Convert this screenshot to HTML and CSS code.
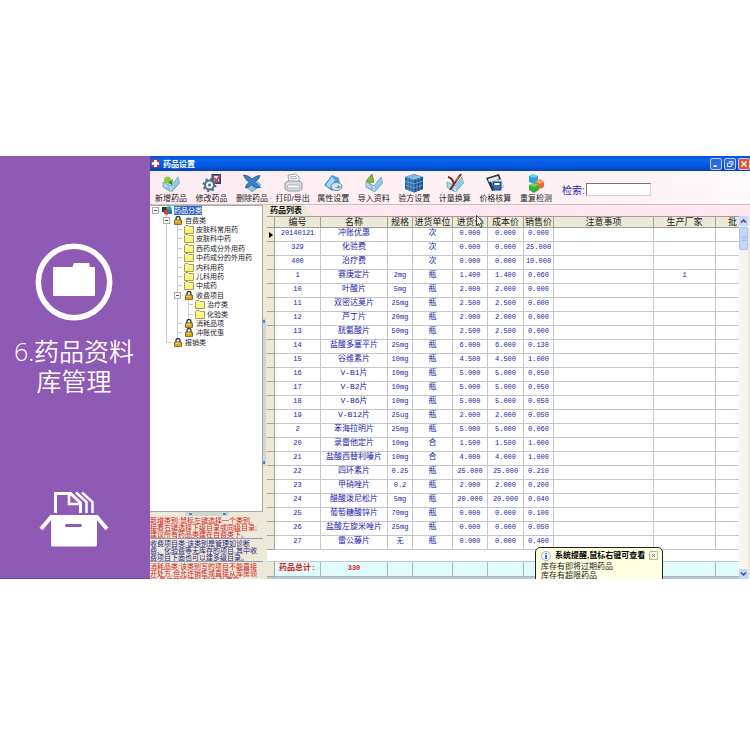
FILE: index.html
```
<!DOCTYPE html>
<html lang="zh-CN">
<head>
<meta charset="utf-8">
<title>药品设置</title>
<link rel="stylesheet" href="styles.css">
</head>
<body>
<svg class="defs" aria-hidden="true">
  <defs>
    <linearGradient id="glass" x1="0" y1="0" x2="1" y2="1"><stop offset="0" stop-color="#e4f6fd"/><stop offset="1" stop-color="#4ba3cf"/></linearGradient>
    <symbol id="folder" viewBox="0 0 10 9"><path d="M.5 8.500V1.500L1.500.5H4l1 1h4.500v7z" fill="#fbf07a" stroke="#8f8748" stroke-width=".8"/><path d="M1.500 3h7" stroke="#fffbd0"/></symbol>
    <symbol id="lock" viewBox="0 0 10 9"><path d="M3 4.500V2.500a2 2 0 0 1 4 0v2" fill="none" stroke="#333" stroke-width="1.300"/><rect x="1.500" y="4" width="7" height="4.700" rx=".6" fill="#dca21b" stroke="#4f3a08" stroke-width=".7"/><path d="M2.500 5.200h4" stroke="#ffe27d"/></symbol>
    <symbol id="book" viewBox="0 0 20 20"><path d="M2 9l8 4 7-9 1.500 6-8 9L2 14z" fill="url(#glass)" stroke="#4b8bab" stroke-width=".7"/><path d="M10 13v5.500" stroke="#fff"/><path d="M10.500 13l6.500-9 1.300 5.500-7.500 8.700z" fill="#8dcbe6"/></symbol>
  </defs>
</svg>
<div class="stage">
  <aside class="side">
    <svg class="side-ring" viewBox="0 0 78 78"><circle cx="39" cy="39" r="35.700" fill="none" stroke="#fff" stroke-width="5.500"/><path d="M19 24h18.500l1.500-4h14.500q1 0 1 1v3h4.500q1 0 1 1v27q0 1-1 1H19q-1 0-1-1V25q0-1 1-1z" fill="#fff"/></svg>
    <h1>6.药品资料<br>库管理</h1>
    <svg class="side-box" viewBox="0 0 70 56"><g fill="none" stroke="#fff" stroke-width="3"><path d="M16.500 22V2.500h15l10 9.500V22"/><path d="M30 2.500v10.500h11.500" stroke-width="2.600"/><path d="M37 1.500l10.500 9.500V22M43 1.500l10.500 9.500V22" stroke-width="2.500"/><path d="M2 38l11-13M68 38L57 25" stroke-width="4"/></g><path d="M12 24h46v30q0 1.500-1.500 1.500h-43Q12 55.500 12 54z" fill="#fff"/><rect x="26" y="33" width="17" height="3" rx="1.500" fill="#8e5ab3"/></svg>
  </aside>
  <main class="app">
    <header class="titlebar">
      <svg viewBox="0 0 10 10"><circle cx="5" cy="5" r="5" fill="#c3382c"/><path d="M3.500 1h3v2.500H9v3H6.500V9h-3V6.500H1v-3h2.500z" fill="#fff"/></svg>
      <span class="title">药品设置</span>
      <button class="win" aria-label="最小化"><svg viewBox="0 0 12 12"><path d="M3 8.500h4" stroke="#fff" stroke-width="2"/></svg></button>
      <button class="win" aria-label="还原"><svg viewBox="0 0 12 12"><path d="M5 4V3h4.500v4H8M3 5h4.500v4H3z" fill="none" stroke="#fff"/></svg></button>
      <button class="win close" aria-label="关闭"><svg viewBox="0 0 12 12"><path d="M3 3l6 6M9 3l-6 6" stroke="#fff" stroke-width="1.700"/></svg></button>
    </header>
    <div class="toolbar">
      <nav class="tools">
        <button><svg viewBox="0 0 20 20"><use href="#book"/><circle cx="6.500" cy="7" r="3.500" fill="#8ecb35"/><path d="M7 10l5-4-1 6z" fill="#398c32"/></svg>新增药品</button>
        <button><svg viewBox="0 0 20 20"><rect x="10" y="1.500" width="8.500" height="9" fill="#466ca7" stroke="#223b67"/><path d="M12 3h5v5h-5z" fill="#dfeaf8"/><path d="M12 5l2.500 3L18 2" stroke="#e9393a" stroke-width="2" fill="none"/><circle cx="7.500" cy="12" r="4.500" fill="#eef5fa" stroke="#536f86" stroke-width="2"/><circle cx="7.500" cy="12" r="6" fill="none" stroke="#536f86" stroke-width="2" stroke-dasharray="2.200 2.500"/><circle cx="7.500" cy="12" r="1.500" fill="#496e8a"/></svg>修改药品</button>
        <button><svg viewBox="0 0 20 20"><path d="M3 13l9-8 7 7-9 7z" fill="url(#glass)" stroke="#5b95bd" stroke-width=".6"/><path d="M1.500 2q5 0 8.500 4 4-3.500 8-3.500-1 4.500-5 6 3 4 5.500 6-5 1.500-9-2.500-3 3.500-6 3 1-4 3.500-5.500-4-3-5.500-7.500z" fill="#3d7fc6" stroke="#23589b" stroke-width=".8"/></svg>删除药品</button>
        <button><svg viewBox="0 0 20 20"><path d="M6 10L5 2l8-1 3 3v6z" fill="#fff" stroke="#888" stroke-width=".8"/><path d="M2 10l3-2h11l3 2v6l-3 2H5l-3-2z" fill="#d7dce2" stroke="#7c838c" stroke-width=".8"/><path d="M5 12h11l1 3H4z" fill="#f8fafc" stroke="#90969d" stroke-width=".6"/><path d="M7 4l6-.5M7 6l7-.5" stroke="#9aa"/></svg>打印/导出</button>
        <button><svg viewBox="0 0 20 20"><path d="M1 12L9 2l7 3 1 6-8 7z" fill="#4d9cdc"/><path d="M3 12l6-8 3 3-5 8z" fill="#a8d7f7"/><ellipse cx="13.500" cy="13.500" rx="5.500" ry="4" fill="#d4e6f4" stroke="#5b88b1"/><path d="M11 14h4l-1-2 4 2-4 2 1-1z" fill="#48a045"/></svg>属性设置</button>
        <button><svg viewBox="0 0 20 20"><use href="#book"/><path d="M2 8l6-7 2 8-4 1z" fill="#7eb83e" stroke="#54852b" stroke-width=".7"/></svg>导入资料</button>
        <button><svg viewBox="0 0 20 20"><path d="M1 4l9-3 9 3v12l-9 3.500L1 16z" fill="#2669a5"/><path d="M1 4l9-3 9 3-9 3z" fill="#70b3dd"/><path d="M10 7l9-3v12l-9 3.500z" fill="#174f8d"/><path d="M10 7v12M4 5v12M7 6v12.500M13 6v12.500M16 5v12M1 8l9 3 9-3M1 12l9 3 9-3M4 3l9 3M7 2l9 3M7 6l9-3" stroke="#9dcff0" stroke-width=".5" fill="none"/></svg>验方设置</button>
        <button><svg viewBox="0 0 20 20"><use href="#book"/><path d="M3 4q5 1 6 8M16 1L5 17" stroke="#6c2c21" stroke-width="2" fill="none"/><path d="M14 3l-3 5" stroke="#d9572e" stroke-width="1.500"/></svg>计量换算</button>
        <button><svg viewBox="0 0 20 20"><path d="M1 5l13-4 5 13-12 4z" fill="#273642"/><path d="M3 6l10-3 1 3L4 9z" fill="#eee"/><path d="M6 8l11-2 2 8-10 3z" fill="#d4e2eb"/><rect x="8" y="9" width="8" height="8" fill="#2d72bd" stroke="#184076"/><path d="M9.500 10h5v2h-5z" fill="#fff"/></svg>价格核算</button>
        <button><svg viewBox="0 0 20 20"><path d="M7 1l5 2v6l-4 2-5-2V3z" fill="#26a7d9"/><path d="M3 3l5 2 4-2-5-2z" fill="#74d2ef"/><path d="M14 6l4 3v5l-4 2-5-2V9z" fill="#ef6536"/><path d="M9 9l5 2 4-2-4-3z" fill="#ff9b66"/><path d="M8 10l5 2v5l-5 3-5-3v-5z" fill="#3eac3b"/><path d="M3 12l5-2 5 2-5 2z" fill="#7bd266"/></svg>重复检测</button>
      </nav>
      <label class="search">检索:<input type="text"></label>
    </div>
    <div class="body">
      <section class="left">
        <div class="treebox">
          <ul class="tree">
            <li class="l0"><i class="ex"></i><svg viewBox="0 0 10 9"><rect x="0" y="1" width="5" height="5" fill="#203f37"/><circle cx="7" cy="3" r="2.700" fill="#25a9a4"/><circle cx="4.500" cy="6" r="2.700" fill="#d33832"/><rect x="6" y="4" width="4" height="4" fill="#2878d0"/></svg><span class="sel">药品分类</span></li>
            <li class="l1"><i class="ex"></i><svg><use href="#lock"/></svg>自费类</li>
            <li class="l2"><i></i><svg><use href="#folder"/></svg>皮肤科常用药</li>
            <li class="l2"><i></i><svg><use href="#folder"/></svg>皮肤科中药</li>
            <li class="l2"><i></i><svg><use href="#folder"/></svg>西药成分外用药</li>
            <li class="l2"><i></i><svg><use href="#folder"/></svg>中药成分的外用药</li>
            <li class="l2"><i></i><svg><use href="#folder"/></svg>内科用药</li>
            <li class="l2"><i></i><svg><use href="#folder"/></svg>儿科用药</li>
            <li class="l2"><i></i><svg><use href="#folder"/></svg>中成药</li>
            <li class="l2"><i class="ex"></i><svg><use href="#lock"/></svg>收费项目</li>
            <li class="l3"><i></i><svg><use href="#folder"/></svg>治疗类</li>
            <li class="l3"><i></i><svg><use href="#folder"/></svg>化验类</li>
            <li class="l2"><i></i><svg><use href="#lock"/></svg>消耗品项</li>
            <li class="l2"><i></i><svg><use href="#lock"/></svg>冲账优惠</li>
            <li class="l1"><i></i><svg><use href="#lock"/></svg>报销类</li>
          </ul>
        </div>
        <div class="hsplit"><span></span></div>
        <div class="notes">
          <p class="red">新增类别:鼠标左键选择一个类别,<br>接着右键选择下级目录或同级目录;<br>建议所有药品类建在自费类下。</p>
          <p class="navy">收费项目类:该类别是管理如诊断<br>费、化验费等无库存的项目,其中收<br>费项目下面也可以建多级目录。</p>
          <p class="red">消耗品类:该类别写的项目不能直接<br>开处方,但允许销售或直接从库房领<br>用,具体的管理如:如床,处置等</p>
        </div>
      </section>
      <div class="vsplit"><span></span></div>
      <section class="right">
        <div class="tabs"><h2>药品列表</h2></div>
        <div class="gridwrap">
          <table>
            <colgroup><col class="w8"><col class="w46"><col class="w67"><col class="w25"><col class="w40"><col class="w35"><col class="w36"><col class="w30"><col class="w100"><col class="w62"><col></colgroup>
            <thead><tr><th></th><th>编号</th><th>名称</th><th>规格</th><th>进货单位</th><th>进货价</th><th>成本价</th><th>销售价</th><th>注意事项</th><th>生产厂家</th><th class="cut">批</th></tr></thead>
            <tbody>
              <tr><th class="cur"></th><td>20140121</td><td>冲账优惠</td><td></td><td>次</td><td>0.000</td><td>0.000</td><td>0.000</td><td></td><td></td><td></td></tr>
              <tr><th></th><td>329</td><td>化验费</td><td></td><td>次</td><td>0.000</td><td>0.000</td><td>25.000</td><td></td><td></td><td></td></tr>
              <tr><th></th><td>400</td><td>治疗费</td><td></td><td>次</td><td>0.000</td><td>0.000</td><td>10.000</td><td></td><td></td><td></td></tr>
              <tr><th></th><td>1</td><td>赛庚定片</td><td>2mg</td><td>瓶</td><td>1.400</td><td>1.400</td><td>0.060</td><td></td><td>1</td><td></td></tr>
              <tr><th></th><td>10</td><td>叶酸片</td><td>5mg</td><td>瓶</td><td>2.000</td><td>2.000</td><td>0.000</td><td></td><td></td><td></td></tr>
              <tr><th></th><td>11</td><td>双密达莫片</td><td>25mg</td><td>瓶</td><td>2.500</td><td>2.500</td><td>0.000</td><td></td><td></td><td></td></tr>
              <tr><th></th><td>12</td><td>芦丁片</td><td>20mg</td><td>瓶</td><td>2.000</td><td>2.000</td><td>0.000</td><td></td><td></td><td></td></tr>
              <tr><th></th><td>13</td><td>胱氨酸片</td><td>50mg</td><td>瓶</td><td>2.500</td><td>2.500</td><td>0.000</td><td></td><td></td><td></td></tr>
              <tr><th></th><td>14</td><td>盐酸多塞平片</td><td>25mg</td><td>瓶</td><td>6.000</td><td>6.000</td><td>0.130</td><td></td><td></td><td></td></tr>
              <tr><th></th><td>15</td><td>谷维素片</td><td>10mg</td><td>瓶</td><td>4.500</td><td>4.500</td><td>1.000</td><td></td><td></td><td></td></tr>
              <tr><th></th><td>16</td><td>V-B1片</td><td>10mg</td><td>瓶</td><td>5.000</td><td>5.000</td><td>0.050</td><td></td><td></td><td></td></tr>
              <tr><th></th><td>17</td><td>V-B2片</td><td>10mg</td><td>瓶</td><td>5.000</td><td>5.000</td><td>0.050</td><td></td><td></td><td></td></tr>
              <tr><th></th><td>18</td><td>V-B6片</td><td>10mg</td><td>瓶</td><td>5.000</td><td>5.000</td><td>0.050</td><td></td><td></td><td></td></tr>
              <tr><th></th><td>19</td><td>V-B12片</td><td>25ug</td><td>瓶</td><td>2.000</td><td>2.000</td><td>0.050</td><td></td><td></td><td></td></tr>
              <tr><th></th><td>2</td><td>苯海拉明片</td><td>25mg</td><td>瓶</td><td>5.000</td><td>5.000</td><td>0.060</td><td></td><td></td><td></td></tr>
              <tr><th></th><td>20</td><td>录雷他定片</td><td>10mg</td><td>合</td><td>1.500</td><td>1.500</td><td>1.000</td><td></td><td></td><td></td></tr>
              <tr><th></th><td>21</td><td>盐酸西替利嗪片</td><td>10mg</td><td>合</td><td>4.000</td><td>4.000</td><td>1.000</td><td></td><td></td><td></td></tr>
              <tr><th></th><td>22</td><td>四环素片</td><td>0.25</td><td>瓶</td><td>25.000</td><td>25.000</td><td>0.210</td><td></td><td></td><td></td></tr>
              <tr><th></th><td>23</td><td>甲硝唑片</td><td>0.2</td><td>瓶</td><td>2.000</td><td>2.000</td><td>0.200</td><td></td><td></td><td></td></tr>
              <tr><th></th><td>24</td><td>醋酸泼尼松片</td><td>5mg</td><td>瓶</td><td>20.000</td><td>20.000</td><td>0.040</td><td></td><td></td><td></td></tr>
              <tr><th></th><td>25</td><td>葡萄糖酸锌片</td><td>70mg</td><td>瓶</td><td>0.000</td><td>0.000</td><td>0.100</td><td></td><td></td><td></td></tr>
              <tr><th></th><td>26</td><td>盐酸左旋米唑片</td><td>25mg</td><td>瓶</td><td>0.000</td><td>0.000</td><td>0.050</td><td></td><td></td><td></td></tr>
              <tr><th></th><td>27</td><td>雷公藤片</td><td>无</td><td>瓶</td><td>0.000</td><td>0.000</td><td>0.400</td><td></td><td></td><td></td></tr>
            </tbody>
            <tfoot>
              <tr class="gap"><td colspan="11"></td></tr>
              <tr class="sum"><th></th><td>药品总计:</td><td>330</td><td></td><td></td><td></td><td></td><td></td><td></td><td></td><td></td></tr>
            </tfoot>
          </table>
          <div class="scroll">
            <button aria-label="向上"><svg viewBox="0 0 9 10"><path d="M2 6.500L4.500 4 7 6.500" fill="none" stroke="#34507f" stroke-width="1.500"/></svg></button>
            <span class="thumb"></span>
            <button class="down" aria-label="向下"><svg viewBox="0 0 9 10"><path d="M2 3.500L4.500 6 7 3.500" fill="none" stroke="#34507f" stroke-width="1.500"/></svg></button>
          </div>
        </div>
      </section>
    </div>
    <svg class="cursor" viewBox="0 0 8 13"><path d="M.5.5v10l2.300-2 1.700 3.800 1.700-.8-1.700-3.500h3z" fill="#fff" stroke="#222" stroke-width=".8"/></svg>
    <div class="tip" role="status">
      <div class="tip-head">
        <svg viewBox="0 0 10 10"><circle cx="5" cy="5" r="4.500" fill="#f4f9ff" stroke="#9fb2cc"/><path d="M5 4v4M5 2v1.300" stroke="#1b3fb5" stroke-width="1.500"/></svg>
        <strong>系统提醒,鼠标右键可查看</strong>
        <button aria-label="关闭提醒"><svg viewBox="0 0 9 9"><path d="M2.500 2.500l4 4M6.500 2.500l-4 4" stroke="#555"/></svg></button>
      </div>
      <p>库存有即将过期药品<br>库存有超限药品</p>
    </div>
  </main>
</div>
</body>
</html>
```
FILE: styles.css
```
* { box-sizing: border-box; margin: 0; padding: 0; }
body { background: #fff; font-family: "Liberation Sans", "Noto Sans CJK SC", sans-serif; font-size: 8px; color: #222; }
button { border: 0; background: none; font: inherit; color: inherit; }
svg { display: block; flex: none; }
.defs { position: absolute; width: 0; height: 0; }

.stage { display: flex; padding-top: 156px; }

/* Purple banner */
.side { width: 150px; flex: none; background: #8e5ab3; border-bottom: 1px solid #7544a0; color: #fff; display: flex; flex-direction: column; align-items: center; padding: 87px 2px 31px 0; }
.side-ring { width: 78px; height: 78px; }
.side h1 { font: 350 25px/30px "Open Sans", "Noto Sans CJK SC", sans-serif; text-align: center; margin-top: 15px; white-space: nowrap; }
.side-box { width: 70px; height: 56px; margin-top: auto; }

/* Application window */
.app { flex: 1; min-width: 0; position: relative; overflow: hidden; background: #ece9d8; display: flex; flex-direction: column; }
.titlebar { display: flex; align-items: center; gap: 2px; height: 15px; padding: 0 0 0 1px; background: linear-gradient(#0a4fd8, #0a63ef 25%, #0456dd 70%, #0340b4); color: #fff; }
.titlebar > svg { width: 9px; height: 9px; }
.title { flex: 1; font-weight: 700; padding-left: 1px; }
.win { width: 12px; height: 12px; border: 1px solid #b8cdf5; border-radius: 2px; background: #2f68e0; }
.win svg { width: 10px; height: 10px; }
.close { background: #e2532b; }

.toolbar { display: flex; height: 34px; background: linear-gradient(90deg, #fdecf1, #fdf2f6 80%, #fefafc); border-bottom: 1px solid #c8c2bc; }
.tools { width: 406px; display: flex; justify-content: space-between; padding-left: 1px; }
.tools button { width: 40px; display: flex; flex-direction: column; align-items: center; padding-top: 2px; line-height: 12px; white-space: nowrap; color: #222; }
.tools svg { width: 20px; height: 20px; }
.search { display: flex; align-items: center; height: 37px; font-size: 10px; color: #3030a8; margin-left: 6px; }
.search input { width: 65px; height: 13px; margin-left: 1px; border: 1px solid #d8d4c8; border-top: 1px solid #77756c; border-left: 1px solid #77756c; background: #fff; font-size: 8px; }

.body { display: flex; flex: 1; }
.left { width: 113px; flex: none; display: flex; flex-direction: column; }
.treebox { flex: 1; background: #fff; border: 1px solid #aaa79b; border-left: 0; }
.tree { list-style: none; display: grid; grid-auto-rows: 1fr; height: 141px; font-size: 7px; line-height: 9px; }
.tree li { display: flex; align-items: center; gap: 2px; white-space: nowrap; }
.tree svg { width: 10px; height: 9px; }
.tree i { width: 8px; height: 7px; flex: none; background: linear-gradient(#ccc, #ccc) 4px 3px / 4px 1px no-repeat; }
.tree .ex { background: linear-gradient(#555, #555) 2px 3px / 3px 1px no-repeat, linear-gradient(#fff, #fff) 1px 1px / 5px 5px no-repeat, linear-gradient(#aaa, #aaa) 0 0 / 7px 7px no-repeat; }
.l0 { padding-left: 2px; }
.l1 { padding-left: 13px; background: linear-gradient(#ccc, #ccc) 16px 0 / 1px 100% no-repeat; }
.l2 { padding-left: 24px; background: linear-gradient(#ccc, #ccc) 16px 0 / 1px 100% no-repeat, linear-gradient(#ccc, #ccc) 27px 0 / 1px 100% no-repeat; }
.l3 { padding-left: 35px; background: linear-gradient(#ccc, #ccc) 16px 0 / 1px 100% no-repeat, linear-gradient(#ccc, #ccc) 27px 0 / 1px 100% no-repeat, linear-gradient(#ccc, #ccc) 38px 0 / 1px 100% no-repeat; }
.l1:last-child { background-size: 1px 50%; }
.sel { background: #3169c6; color: #fff; }
.hsplit { height: 4px; display: flex; justify-content: center; }
.hsplit span { width: 44px; background: linear-gradient(90deg, #4b86c8, #4b86c8) 4px 1px / 3px 2px no-repeat, linear-gradient(#4b86c8, #4b86c8) 38px 1px / 3px 2px no-repeat, #d0d6d6; }
.notes { height: 63px; overflow: hidden; font-size: 7px; line-height: 7px; white-space: nowrap; }
.notes p { height: 23px; padding-top: 1px; border-bottom: 1px solid #8f9db5; }
.red { color: #d22424; }
.navy { color: #22227c; }
.vsplit { width: 4px; display: flex; align-items: center; }
.vsplit span { width: 3px; height: 148px; background: linear-gradient(#4b86c8, #4b86c8) 0 2px / 2px 3px no-repeat, linear-gradient(#4b86c8, #4b86c8) 0 143px / 2px 3px no-repeat, #cfd4d8; }

.right { flex: 1; min-width: 0; display: flex; flex-direction: column; }
.tabs { height: 11px; background: #ffe6f0; }
.tabs h2 { width: 46px; height: 11px; padding-left: 3px; font-size: 8px; line-height: 11px; color: #111; background: #ece9d8; clip-path: polygon(0 0, 80% 0, 100% 100%, 0 100%); }
.gridwrap { display: flex; }
table { flex: 1; width: 0; table-layout: fixed; border-collapse: separate; border-spacing: 0; background: #fff; border-bottom: 2px solid #b9cbd2; }
.w8 { width: 8px; } .w46 { width: 46px; } .w67 { width: 67px; } .w25 { width: 25px; } .w40 { width: 40px; }
.w35 { width: 35px; } .w36 { width: 36px; } .w30 { width: 30px; } .w100 { width: 100px; } .w62 { width: 62px; }
th, td { height: 14px; line-height: 10px; text-align: center; white-space: nowrap; overflow: hidden; border-right: 1px solid #c6c6ce; border-bottom: 1px solid #c6c6ce; }
td { font-family: "Liberation Mono", "Noto Sans CJK SC", monospace; font-size: 7px; color: #1a1aa8; padding-bottom: 3px; }
td:nth-child(3), td:nth-child(5) { font-size: 8px; }
thead th { height: 12px; font-size: 9px; font-weight: 400; color: #222; background: #ece9d8; border-color: #a19f94; border-top: 1px solid #a19f94; }
tbody th, .sum th { background: #ece9d8; border-color: #a8a69c; }
thead .cut { text-align: left; padding-left: 12px; border-right: 0; }
td:last-child { border-right: 0; }
.cur::after { content: ""; display: block; width: 0; margin: 0 auto; border: 3px solid transparent; border-left: 4px solid #000; border-right: 0; }
.gap td { height: 12px; padding: 0; }
.sum td { height: 15px; background: #e0fbfb; color: #cf1d1d; font-weight: 700; border-color: #a9b9b9; }
.sum td:nth-child(2) { font-size: 8px; }
.sum td:nth-child(3) { font-size: 7px; }
.scroll { width: 9px; margin-right: 2px; flex: none; display: flex; flex-direction: column; background: #f6f5ee; }
.scroll button { width: 9px; height: 10px; background: #c6d6fb; border-radius: 1px; }
.scroll svg { width: 9px; height: 10px; }
.thumb { height: 23px; margin-top: 1px; border: 1px solid #a9c0ef; border-radius: 2px; background: repeating-linear-gradient(#9db8ee 0 1px, transparent 1px 2px) center / 4px 5px no-repeat, #c6d6fb; }
.scroll .down { margin-top: auto; }

.cursor { position: absolute; left: 326px; top: 59px; width: 8px; height: 13px; }
.tip { position: absolute; left: 385px; top: 391px; width: 128px; padding: 2px 5px; border: 1px solid #222; border-radius: 5px; background: #ffffe1; color: #222; line-height: 9px; }
.tip-head { display: flex; align-items: center; gap: 4px; height: 11px; color: #000; white-space: nowrap; }
.tip-head svg { width: 10px; height: 10px; }
.tip-head strong { flex: 1; }
.tip-head button { width: 9px; height: 9px; border: 1px solid #bbb7a0; border-radius: 1px; }
.tip-head button svg { width: 7px; height: 7px; }
.tip p { margin-top: 1px; white-space: nowrap; }
```
